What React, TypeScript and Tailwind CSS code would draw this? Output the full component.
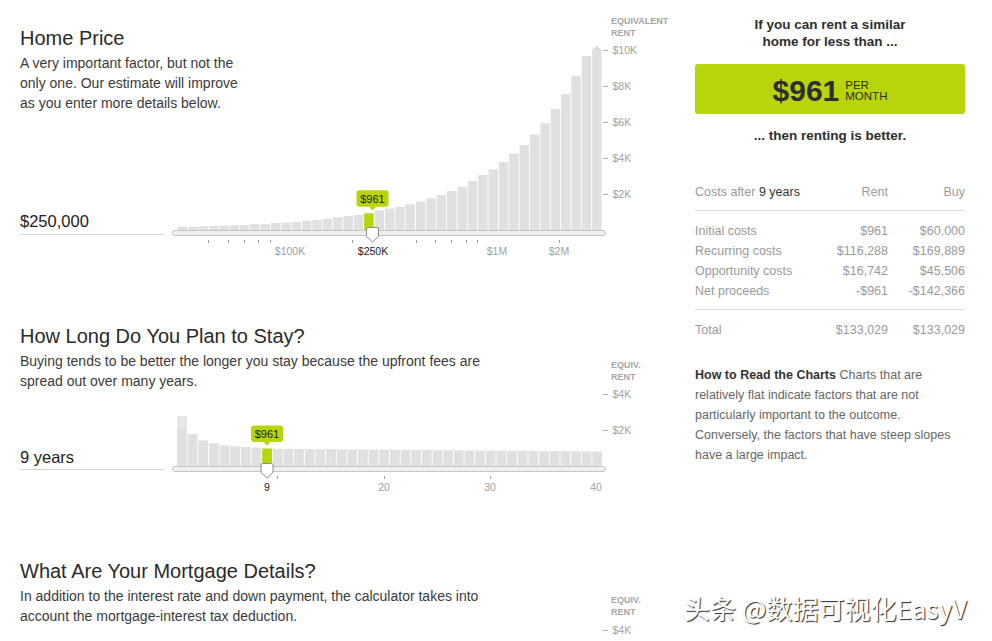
import React from "react";

const GREEN = "#b9d40b";
const BAR = "#e0e0e0";
const SANS = "'Liberation Sans', Arial, sans-serif";

// equivalent rent per price bucket, in px (18px = $1K)
const homeBars = [
  3.4, 3.4, 3.7, 4, 4.3, 4.7, 5, 6, 6, 7, 7.3, 8, 9.3, 10, 11.3, 12.7, 14, 15, 16.7,
  19.7, 21.4, 23, 25.7, 28.4, 31.7, 35, 39, 43.4, 49, 55, 60.7, 68, 76.4, 85, 95.7,
  106.7, 121, 136, 154, 174, 180,
];

const stayBars = Array.from({ length: 40 }, (_, i) =>
  i < 9 ? [50, 32, 25.7, 22.7, 20.7, 19.7, 19, 18.5, 17.5][i] : 17.2 - (i - 9) * 0.09
);

type Label = { x: number; text: string; active?: boolean };

type ChartProps = {
  className: string;
  top: number;
  height: number;
  base: number;
  head: string;
  headY: number;
  yTicks: number[];
  bars?: number[];
  x0?: number;
  pitch?: number;
  sel?: number;
  thumbX?: number;
  ticks?: number[];
  labels?: Label[];
  overflow?: boolean;
  split?: number;
};

function RentChart({
  className,
  top,
  height,
  base,
  head,
  headY,
  yTicks,
  bars = [],
  x0 = 177,
  pitch = 10.65,
  sel = 0,
  thumbX = 0,
  ticks = [],
  labels = [],
  overflow,
  split,
}: ChartProps) {
  const x = thumbX;
  const hasBars = bars.length > 0;
  const selTop = hasBars ? base - bars[sel] : base;
  const last = x0 + (bars.length - 1) * pitch;
  return (
    <svg
      width={510}
      height={height}
      viewBox={`165 ${top} 510 ${height}`}
      className={className}
      fontFamily={SANS}
    >
      <text x={611} y={headY} fontSize={9} fontWeight={700} fill="#a6a6a6">
        {head}
      </text>
      <text x={611} y={headY + 11.5} fontSize={9} fontWeight={700} fill="#a6a6a6">
        RENT
      </text>

      {yTicks.map((k) => {
        const y = Math.round(base - k * 18) + 0.5;
        return (
          <g key={k}>
            <line x1={603} x2={608} y1={y} y2={y} stroke="#b0b0b0" />
            <text x={612.5} y={y + 3.6} fontSize={10.5} fill="#a0a0a0">
              ${k}K
            </text>
          </g>
        );
      })}

      {hasBars && (
        <>
          {bars.map((h, i) => (
            <rect
              key={i}
              x={x0 + i * pitch}
              y={base - h}
              width={pitch - 0.9}
              height={h}
              fill={i === sel ? GREEN : BAR}
            />
          ))}
          {split !== undefined && (
            <rect
              x={x0}
              y={base - bars[0]}
              width={pitch - 0.9}
              height={split - (base - bars[0])}
              fill="#e6e6e6"
            />
          )}
          {overflow && (
            <polygon
              points={`${last},${base - bars[bars.length - 1]} ${last + pitch - 0.9},${base - bars[bars.length - 1]} ${last + (pitch - 0.9) / 2},${base - bars[bars.length - 1] - 4}`}
              fill="#dadada"
            />
          )}

          <rect x={172.5} y={base + 0.5} width={433} height={5} rx={2.5} fill="#efefef" stroke="#c4c4c4" />

          {ticks.map((t) => (
            <line key={t} x1={t + 0.5} x2={t + 0.5} y1={base + 10} y2={base + 13} stroke="#9a9a9a" />
          ))}
          {labels.map((l) => (
            <text
              key={l.text}
              x={l.x}
              y={base + 25}
              fontSize={10.5}
              textAnchor="middle"
              fill={l.active ? "#222" : "#a0a0a0"}
            >
              {l.text}
            </text>
          ))}

          <path
            d={`M${x - 6} ${base - 1} Q${x - 6} ${base - 2.5} ${x - 4.5} ${base - 2.5} H${x + 4.5} Q${x + 6} ${base - 2.5} ${x + 6} ${base - 1} V${base + 6.5} L${x} ${base + 12} L${x - 6} ${base + 6.5} Z`}
            fill="#fff"
            stroke="#8c8c8c"
          />

          <rect x={x - 16} y={selTop - 23} width={32} height={16.5} rx={3} fill={GREEN} />
          <polygon
            points={`${x - 3.5},${selTop - 6.6} ${x + 3.5},${selTop - 6.6} ${x},${selTop - 2.8}`}
            fill={GREEN}
          />
          <text x={x} y={selTop - 10.8} fontSize={11} textAnchor="middle" fill="#1a1a1a">
            $961
          </text>
        </>
      )}
    </svg>
  );
}

const costRows = [
  ["Initial costs", "$961", "$60,000"],
  ["Recurring costs", "$116,288", "$169,889"],
  ["Opportunity costs", "$16,742", "$45,506"],
  ["Net proceeds", "-$961", "-$142,366"],
];

export default function App() {
  return (
    <div className="relative flex min-h-screen w-full bg-white font-['Liberation_Sans',Arial,sans-serif] text-[#333]">
      <main className="w-[695px] shrink-0 pl-[20px]">
        {/* Home Price */}
        <section className="flex">
          <div className="flex w-[145px] shrink-0 flex-col pt-[25px]">
            <h2 className="whitespace-nowrap text-[20px] leading-[26px] text-[#2a2a2a]">Home Price</h2>
            <p className="mt-[2px] whitespace-nowrap text-[14px] leading-[20px] text-[#3a3a3a]">
              A very important factor, but not the
              <br />
              only one. Our estimate will improve
              <br />
              as you enter more details below.
            </p>
            <div className="mt-auto mb-[27px] border-b border-[#d4d4d4] pb-[3px] text-[16.5px] leading-[20px] text-[#222]">
              $250,000
            </div>
          </div>
          <RentChart
            className="mt-[10px] block shrink-0"
            top={10}
            height={252}
            base={230}
            head="EQUIVALENT"
            headY={24}
            yTicks={[10, 8, 6, 4, 2]}
            bars={homeBars}
            x0={177.7}
            pitch={10.36}
            sel={18}
            thumbX={372.5}
            ticks={[208, 228, 244, 258, 270, 352, 416, 435, 451, 466, 477, 559]}
            labels={[
              { x: 290, text: "$100K" },
              { x: 373, text: "$250K", active: true },
              { x: 497, text: "$1M" },
              { x: 559, text: "$2M" },
            ]}
            overflow
          />
        </section>

        {/* How long */}
        <section className="mt-[61px] flex">
          <div className="flex w-[145px] shrink-0 flex-col">
            <h2 className="whitespace-nowrap text-[20px] leading-[26px] text-[#2a2a2a]">
              How Long Do You Plan to Stay?
            </h2>
            <p className="mt-[2px] whitespace-nowrap text-[14px] leading-[20px] text-[#3a3a3a]">
              Buying tends to be better the longer you stay because the upfront fees are
              <br />
              spread out over many years.
            </p>
            <div className="mt-auto mb-[25px] border-b border-[#d4d4d4] pb-[2px] text-[16.5px] leading-[20px] text-[#222]">
              9 years
            </div>
          </div>
          <RentChart
            className="mt-[27px] block shrink-0"
            top={350}
            height={145}
            base={466}
            head="EQUIV."
            headY={368.3}
            yTicks={[4, 2]}
            bars={stayBars}
            x0={177}
            pitch={10.65}
            sel={8}
            thumbX={267}
            ticks={[277, 384, 490]}
            labels={[
              { x: 267, text: "9", active: true },
              { x: 384, text: "20" },
              { x: 490, text: "30" },
              { x: 596, text: "40" },
            ]}
            split={429}
          />
        </section>

        {/* Mortgage */}
        <section className="mt-[63px] flex">
          <div className="flex w-[145px] shrink-0 flex-col">
            <h2 className="whitespace-nowrap text-[20px] leading-[26px] text-[#2a2a2a]">
              What Are Your Mortgage Details?
            </h2>
            <p className="mt-[2px] whitespace-nowrap text-[14px] leading-[20px] text-[#3a3a3a]">
              In addition to the interest rate and down payment, the calculator takes into
              <br />
              account the mortgage-interest tax deduction.
            </p>
          </div>
          <RentChart
            className="mt-[27px] block shrink-0"
            top={585}
            height={56}
            base={702}
            head="EQUIV."
            headY={603.3}
            yTicks={[4]}
          />
        </section>
      </main>

      <aside className="w-[270px] shrink-0 pt-[16px]">
        <p className="text-center text-[13.5px] font-bold leading-[17px] text-[#2e2e2e]">
          If you can rent a similar
          <br />
          home for less than ...
        </p>
        <div className="mt-[14px] flex h-[50px] justify-center gap-[6px] rounded-[3px] bg-[#b9d40b] pt-[12px] text-[#2e2e2e]">
          <span className="text-[30px] font-bold leading-none">$961</span>
          <span className="mt-[4px] text-[11.5px] leading-[11px]">
            PER
            <br />
            MONTH
          </span>
        </div>
        <p className="mt-[13px] text-center text-[13.5px] font-bold leading-[17px] text-[#2e2e2e]">
          ... then renting is better.
        </p>

        <div className="mt-[38px] text-[12.5px] leading-[20px] text-[#9a9a9a]">
          <div className="grid grid-cols-[1fr_80px_77px] border-b border-[#dedede] pb-[8px]">
            <span>
              Costs after <span className="text-[#333]">9 years</span>
            </span>
            <span className="text-right">Rent</span>
            <span className="text-right">Buy</span>
          </div>
          <div className="border-b border-[#dedede] pt-[10px] pb-[8px]">
            {costRows.map(([label, rent, buy]) => (
              <div key={label} className="grid grid-cols-[1fr_80px_77px]">
                <span>{label}</span>
                <span className="text-right">{rent}</span>
                <span className="text-right">{buy}</span>
              </div>
            ))}
          </div>
          <div className="grid grid-cols-[1fr_80px_77px] pt-[10px]">
            <span>Total</span>
            <span className="text-right">$133,029</span>
            <span className="text-right">$133,029</span>
          </div>
        </div>

        <p className="mt-[25px] whitespace-nowrap text-[12.5px] leading-[20px] text-[#666]">
          <span className="font-bold text-[#333]">How to Read the Charts</span> Charts that are
          <br />
          relatively flat indicate factors that are not
          <br />
          particularly important to the outcome.
          <br />
          Conversely, the factors that have steep slopes
          <br />
          have a large impact.
        </p>
      </aside>

      <div className="absolute left-[684px] top-[593px] whitespace-nowrap font-['Noto_Sans_CJK_SC',sans-serif] text-[26px] leading-[30px] text-white [text-shadow:1px_1px_1px_rgba(0,0,0,0.85)]">
        头条 @数据可视化EasyV
      </div>
    </div>
  );
}
